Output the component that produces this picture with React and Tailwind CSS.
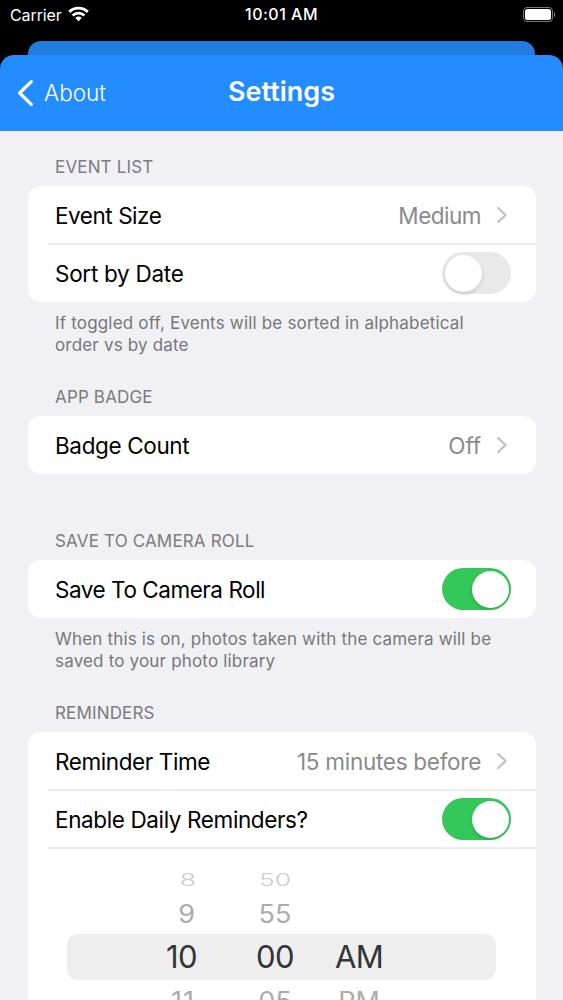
import clsx from "clsx";

function StatusBar() {
  return (
    <div className="flex h-[41px] items-start justify-between bg-black text-white">
      <div className="flex h-[29px] w-[140px] items-center pl-[10px]">
        <span className="text-[16px] tracking-[-0.1px]">Carrier</span>
        <svg width="21" height="16" viewBox="0 0 21 16" className="mb-[1px] ml-[6px]" fill="none" stroke="white">
          <path d="M1.2 5.9a13.4 13.4 0 0 1 18.6 0" strokeWidth="2.9" />
          <path d="M4.6 9.5a8.5 8.5 0 0 1 11.8 0" strokeWidth="2.7" />
          <path d="M10.5 15.3l-3.2-3.4a4.7 4.7 0 0 1 6.4 0z" fill="white" stroke="none" />
        </svg>
      </div>
      <span className="text-[16px] leading-[29px] font-medium tracking-[0.5px]">10:01 AM</span>
      <div className="flex h-[28px] w-[140px] items-center justify-end gap-[1px] pr-[8px]">
        <div className="h-[15px] w-[30px] rounded-[4px] border border-[#77777b] p-[1px]">
          <div className="h-full w-full rounded-[2.5px] bg-white" />
        </div>
        <div className="h-[5px] w-[1.5px] rounded-r-full bg-[#77777b]" />
      </div>
    </div>
  );
}

function NavBar() {
  return (
    <div className="bg-black">
      <div className="mx-[28px] h-[14px] rounded-t-[13px] bg-[#237de1]" />
      <div className="bg-[linear-gradient(to_right,black_0,black_28px,#237de1_28px,#237de1_535px,black_535px)]">
        <div className="flex h-[76px] items-center rounded-t-[14px] bg-[#238cff] text-white">
          <div className="flex w-[181px] items-center pl-[17px]">
            <svg width="17" height="28" viewBox="0 0 17 28" fill="none" stroke="white" strokeWidth="3.2" strokeLinecap="round" strokeLinejoin="round">
              <path d="M14.3 2.6L2.6 14l11.7 11.4" />
            </svg>
            <span className="ml-[10px] text-[22.5px] font-light">About</span>
          </div>
          <h1 className="w-[201px] pb-[1px] text-center text-[27px] font-semibold">Settings</h1>
        </div>
      </div>
    </div>
  );
}

function Toggle({ on }) {
  return (
    <div
      className={clsx(
        "flex h-[42px] w-[69px] items-center rounded-full px-[2.5px]",
        on ? "justify-end bg-[#34c759]" : "justify-start bg-[#e9e9ea]"
      )}
    >
      <div className="h-[37px] w-[37px] rounded-full bg-white shadow-[0_2px_4px_rgba(0,0,0,0.15)]" />
    </div>
  );
}

function Row({ label, labelClass, value, valueClass, toggle, last }) {
  return (
    <div className="relative flex h-[58px] items-center justify-between pr-[25px] pl-[27px]">
      <span className={clsx("pt-[2px] text-[22.5px] text-black", labelClass)}>{label}</span>
      {toggle !== undefined ? (
        <Toggle on={toggle} />
      ) : (
        <div className="flex items-center gap-[15px] pr-[3px]">
          <span className={clsx("pt-[2px] text-[22.5px] text-[#8a8a8d]", valueClass)}>{value}</span>
          <svg width="12" height="18" viewBox="0 0 12 18" fill="none" stroke="#c1c1c4" strokeWidth="2.3" strokeLinecap="round" strokeLinejoin="round">
            <path d="M2.2 2l7.4 7-7.4 7" />
          </svg>
        </div>
      )}
      {!last && <div className="absolute right-0 bottom-[-1px] left-[20px] h-[2px] bg-[#ededf0]" />}
    </div>
  );
}

function Section({ title, footer, className, children }) {
  return (
    <section className={clsx("pr-[27px] pl-[28px]", className)}>
      <h2 className="mb-[9px] pl-[27px] text-[17px] leading-[20px] tracking-[0.16px] text-[#7b7b80]">{title}</h2>
      <div className="overflow-hidden rounded-[13px] bg-white">{children}</div>
      {footer && (
        <div className="pt-[10px] pl-[27px] text-[17px] leading-[22px] tracking-[0.18px] text-[#77777c]">
          {footer.map((line) => (
            <p key={line} className="whitespace-nowrap">
              {line}
            </p>
          ))}
        </div>
      )}
    </section>
  );
}

function PickerRow({ hour, minute, period, className, textClass, hourClass }) {
  return (
    <div className={clsx("mr-[40px] ml-[39px] flex items-center", className)}>
      <div className={clsx("flex w-full origin-center items-center", textClass)}>
        <span className={clsx("w-[130px] text-right", hourClass)}>{hour}</span>
        <span className="ml-[41px] w-[74px] text-center">{minute}</span>
        <span className="w-[94px] text-center">{period}</span>
      </div>
    </div>
  );
}

function TimePicker() {
  return (
    <div className="h-[250px] pt-[17px]">
      <PickerRow hour="8" minute="50" className="h-[29px]" textClass="text-[26.5px] scale-y-[0.65] font-light text-[#cbcbcc]" hourClass="pr-[1px]" />
      <PickerRow hour="9" minute="55" className="h-[40px] pt-[2px]" textClass="text-[27px] scale-y-[0.94] text-[#acacad]" hourClass="pr-[2px]" />
      <PickerRow hour="10" minute="00" period="AM" className="h-[46px] rounded-[11px] bg-[#eeeeef]" textClass="text-[31px] tracking-[-0.6px] text-[#343436]" />
      <PickerRow hour="11" minute="05" period="PM" className="h-[42px] pt-[2px]" textClass="text-[27px] scale-y-[0.94] text-[#acacad]" hourClass="pr-[2px] tracking-[1px]" />
    </div>
  );
}

export default function App() {
  return (
    <div className="h-[1000px] w-[563px] overflow-hidden bg-[#f0f0f5] font-['Inter',sans-serif]">
      <StatusBar />
      <NavBar />
      <Section
        title="EVENT LIST"
        className="mt-[26px]"
        footer={["If toggled off, Events will be sorted in alphabetical", "order vs by date"]}
      >
        <Row label="Event Size" labelClass="tracking-[-0.45px]" value="Medium" valueClass="tracking-[-0.5px]" />
        <Row label="Sort by Date" labelClass="tracking-[-0.28px]" toggle={false} last />
      </Section>
      <Section title="APP BADGE" className="mt-[31px]">
        <Row label="Badge Count" labelClass="tracking-[-0.36px]" value="Off" valueClass="tracking-[-0.1px]" last />
      </Section>
      <Section
        title="SAVE TO CAMERA ROLL"
        className="mt-[57px]"
        footer={["When this is on, photos taken with the camera will be", "saved to your photo library"]}
      >
        <Row label="Save To Camera Roll" labelClass="tracking-[-0.46px]" toggle={true} last />
      </Section>
      <Section title="REMINDERS" className="mt-[31px]">
        <Row label="Reminder Time" labelClass="tracking-[-0.4px]" value="15 minutes before" valueClass="tracking-[-0.27px]" />
        <Row label="Enable Daily Reminders?" labelClass="tracking-[-0.38px]" toggle={true} />
        <TimePicker />
      </Section>
    </div>
  );
}
